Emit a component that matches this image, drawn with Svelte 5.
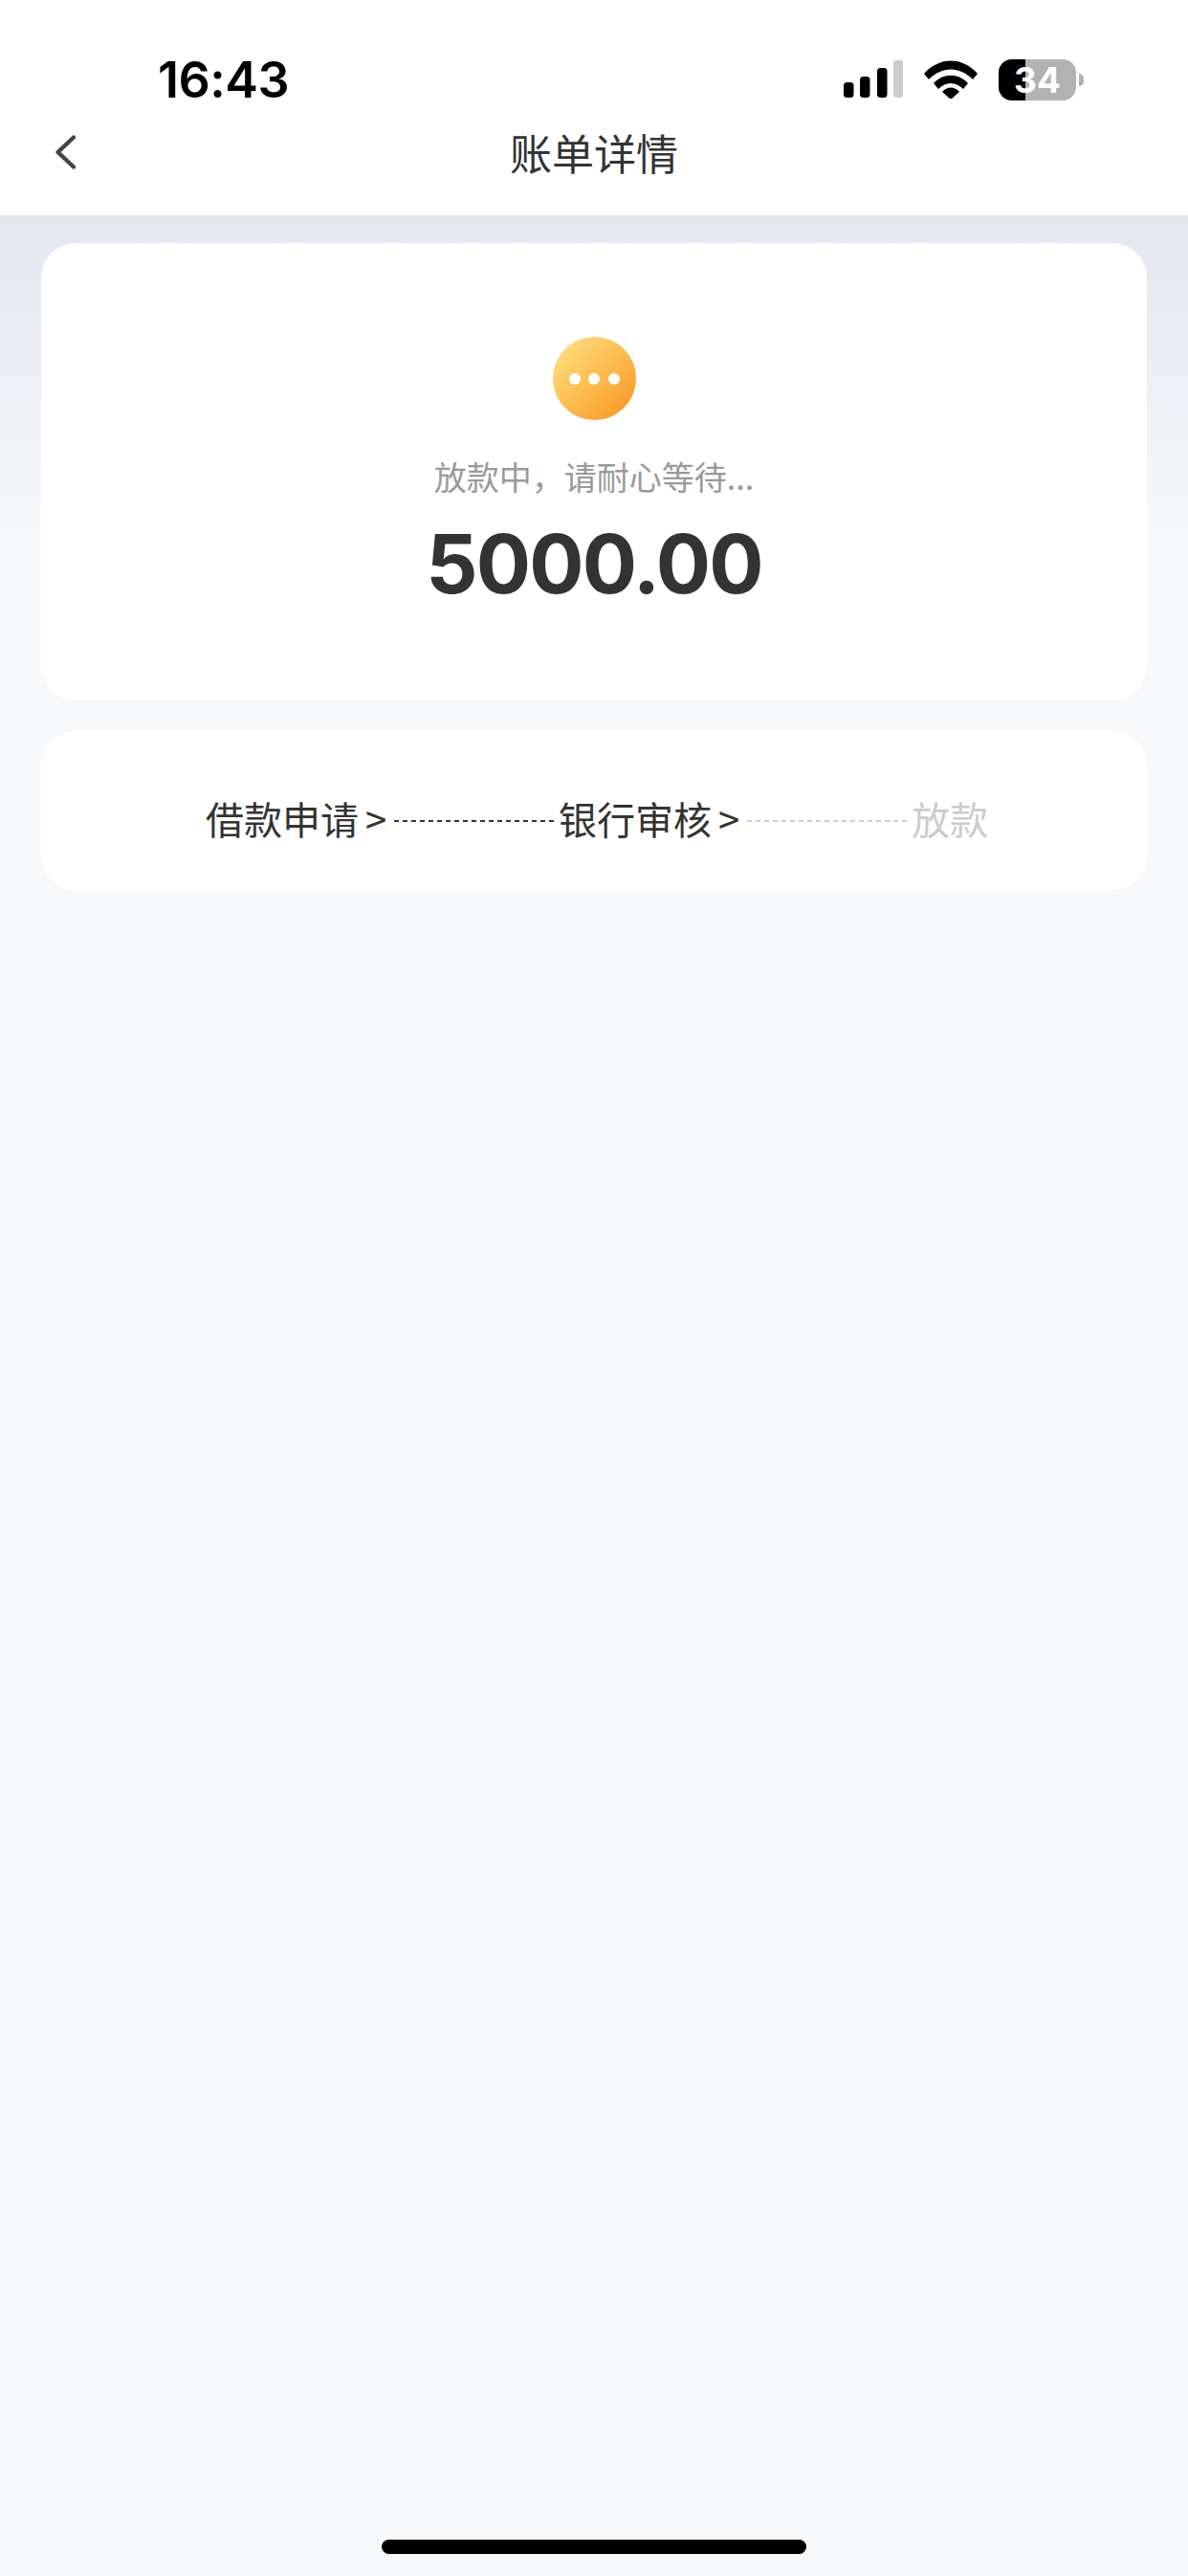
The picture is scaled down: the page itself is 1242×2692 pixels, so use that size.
<script lang="ts">
    const steps = [
        { label: "借款申请", done: true },
        { label: "银行审核", done: true },
        { label: "放款", done: false },
    ];
</script>

<div class="page">
    <header class="top">
        <div class="status">
            <span class="time">16:43</span>
            <div class="indicators">
                <svg class="signal" width="62" height="40" viewBox="0 0 62 40">
                    <rect x="0" y="23" width="10.5" height="16" rx="3.5" fill="#000" />
                    <rect x="17" y="17" width="10.5" height="22" rx="3.5" fill="#000" />
                    <rect x="35" y="8" width="10.5" height="31" rx="3.5" fill="#000" />
                    <rect x="52" y="0" width="10.5" height="39" rx="3.5" fill="#ccc" />
                </svg>
                <svg class="wifi" width="56" height="40" viewBox="0 0 56 40">
                    <path d="M0 14 C16 -4 40 -4 56 14 L51 20 C37 6 19 6 5 20 Z" fill="#000" />
                    <path d="M10 24 C20 13 36 13 46 24 L41 30 C33 22 23 22 15 30 Z" fill="#000" />
                    <path d="M19 33 C24 27 32 27 37 33 L28 41 Z" fill="#000" />
                </svg>
                <div class="battery">
                    <div class="cell">
                        <div class="level"></div>
                        <span class="pct">34</span>
                    </div>
                    <div class="cap"></div>
                </div>
            </div>
        </div>
        <nav class="bar">
            <svg class="back" width="25" height="40" viewBox="0 0 25 40">
                <path d="M21 4.5 L4.5 20 L21 35.5" fill="none" stroke="#444" stroke-width="4.4" stroke-linecap="round" stroke-linejoin="round" />
            </svg>
            <h1>账单详情</h1>
        </nav>
    </header>

    <main class="content">
        <section class="card summary">
            <div class="pending">
                <i></i><i></i><i></i>
            </div>
            <p class="hint">放款中，请耐心等待...</p>
            <p class="amount">5000.00</p>
        </section>

        <section class="card progress">
            {#each steps as step, i}
                <span class="step" class:off={!step.done}>{step.label}</span>
                {#if i < steps.length - 1}
                    <span class="arrow">&gt;</span>
                    <span class="dash" class:off={!steps[i + 1].done}></span>
                {/if}
            {/each}
        </section>
    </main>

    <div class="home"></div>
</div>

<style>
    :global(body) {
        margin: 0;
        background: #f7f8fa;
    }

    .page {
        min-height: 2692px;
        display: flex;
        flex-direction: column;
        font-family: "Noto Sans CJK SC", "Noto Sans", sans-serif;
        background: linear-gradient(#e3e6ef 225px, #f7f8fa 560px);
    }

    .top {
        background: #fff;
        height: 225px;
    }

    .status {
        box-sizing: border-box;
        height: 108px;
        padding: 62px 109px 0 165px;
        display: flex;
        justify-content: space-between;
    }

    .time {
        font-family: Inter, sans-serif;
        font-weight: 600;
        font-size: 52px;
        line-height: 44px;
        letter-spacing: -0.5px;
        color: #000;
    }

    .indicators {
        display: flex;
        align-items: center;
        height: 42px;
    }

    .signal {
        margin-right: 22px;
    }

    .wifi {
        margin-right: 22px;
    }

    .battery {
        display: flex;
        align-items: center;
        gap: 3px;
    }

    .cell {
        position: relative;
        width: 81px;
        height: 43px;
        border-radius: 14px;
        overflow: hidden;
        background: #b2b2b2;
        display: flex;
        align-items: center;
        justify-content: center;
    }

    .level {
        position: absolute;
        left: 0;
        top: 0;
        bottom: 0;
        width: 28px;
        background: #000;
    }

    .pct {
        position: relative;
        font-family: Inter, sans-serif;
        font-weight: 700;
        font-size: 37px;
        line-height: 43px;
        color: #fff;
    }

    .cap {
        width: 5px;
        height: 13px;
        border-radius: 0 6px 6px 0;
        background: #b2b2b2;
    }

    .bar {
        position: relative;
        box-sizing: border-box;
        height: 117px;
        padding-bottom: 15px;
        display: flex;
        align-items: center;
        justify-content: center;
    }

    .back {
        position: absolute;
        left: 56px;
        top: 31px;
    }

    h1 {
        margin: 0;
        font-size: 44px;
        font-weight: 400;
        line-height: 60px;
        color: #333;
    }

    .content {
        padding: 29px 43px 0;
        display: flex;
        flex-direction: column;
        gap: 32px;
    }

    .card {
        background: #fff;
        border-radius: 36px;
    }

    .summary {
        padding: 98px 0 92px;
        display: flex;
        flex-direction: column;
        align-items: center;
    }

    .pending {
        width: 87px;
        height: 87px;
        border-radius: 50%;
        background: linear-gradient(135deg, #ffe48c 0%, #fcbc50 50%, #f8931c 100%);
        display: flex;
        align-items: center;
        justify-content: center;
        gap: 8.5px;
    }

    .pending i {
        width: 12px;
        height: 12px;
        border-radius: 50%;
        background: #fff;
    }

    .hint {
        margin: 34px 0 0;
        font-size: 34px;
        line-height: 50px;
        color: #999;
    }

    .amount {
        margin: 17px 0 0;
        font-family: Inter, sans-serif;
        font-weight: 700;
        font-size: 85px;
        line-height: 100px;
        letter-spacing: -1.8px;
        color: #333;
    }

    .progress {
        height: 166px;
        box-sizing: border-box;
        padding: 65px 0 0 6px;
        display: flex;
        justify-content: center;
        align-items: flex-start;
    }

    .step {
        font-size: 40px;
        line-height: 52px;
        color: #333;
    }

    .step.off {
        color: #ccc;
    }

    .arrow {
        width: 20px;
        margin: 0 9px 0 8px;
        display: flex;
        justify-content: center;
        font-size: 40px;
        line-height: 52px;
        color: #333;
    }

    .dash {
        width: 167px;
        height: 2px;
        margin: 28px 5px 0 0;
        background: repeating-linear-gradient(90deg, #333 0 5px, transparent 5px 9px);
    }

    .dash.off {
        background: repeating-linear-gradient(90deg, #ccc 0 5px, transparent 5px 9px);
    }

    .home {
        width: 444px;
        height: 15px;
        border-radius: 8px;
        background: #000;
        margin: auto auto 23px;
    }
</style>
